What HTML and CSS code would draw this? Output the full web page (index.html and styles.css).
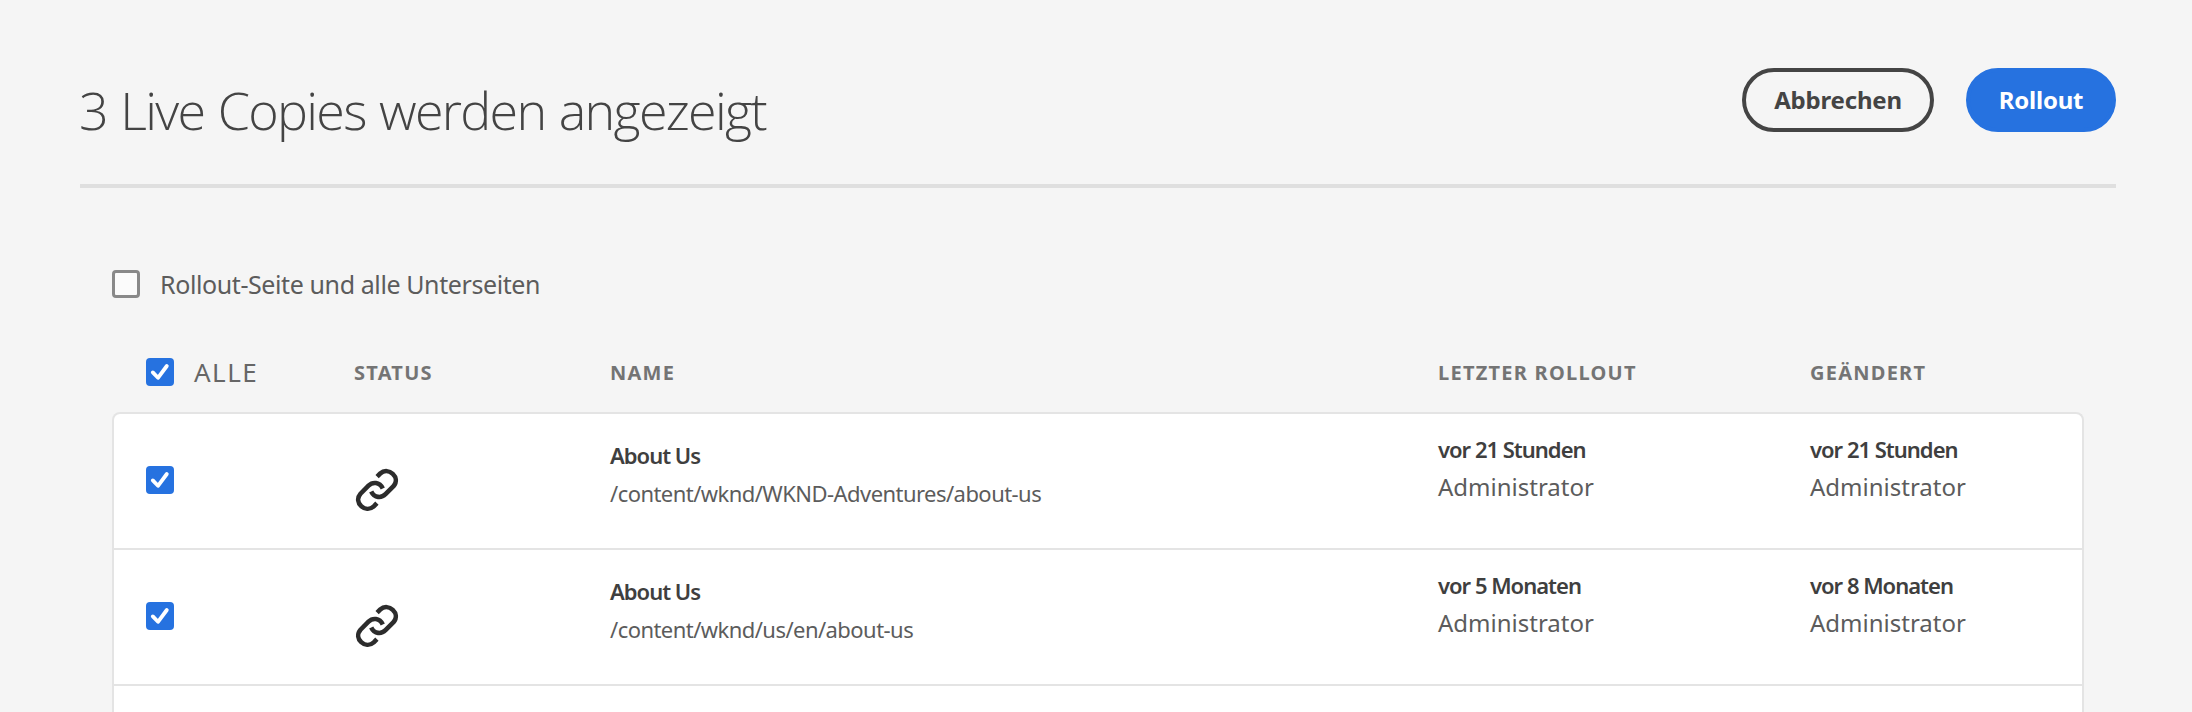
FILE: index.html
```html
<!DOCTYPE html>
<html lang="de">
<head>
<meta charset="utf-8">
<title>Rollout</title>
<link rel="stylesheet" href="styles.css">
</head>
<body>
<svg class="defs" aria-hidden="true">
  <symbol id="check" viewBox="0 0 28 28"><path d="M6.8 14.4 L12 19.8 L20.8 8" fill="none" stroke="#fff" stroke-width="3.8" stroke-linecap="round" stroke-linejoin="round"/></symbol>
  <symbol id="link" viewBox="0 0 44 44"><g fill="none" stroke="#2c2c2c" stroke-width="4.6"><path d="M22.1 8.6 L25.2 5.5 C33.5 -1.8 46 9.5 38.5 18.2 L30.5 26.2 C26.5 30.2 19.5 30.2 16.2 23.4"/><path d="M21.9 35.2 L18.8 38.4 C10.5 45.8 -2 34.4 5.5 25.7 L13.5 17.7 C17.5 13.7 24.5 13.7 27.8 20.5"/></g></symbol>
</svg>
<header class="header">
  <h1 class="title">3 Live Copies werden angezeigt</h1>
  <div class="actions">
    <button class="btn btn-secondary">Abbrechen</button>
    <button class="btn btn-primary">Rollout</button>
  </div>
</header>
<main class="content">
  <label class="option"><span class="box"></span><span class="option-text">Rollout-Seite und alle Unterseiten</span></label>
  <div class="grid head">
    <div class="all"><span class="box checked"><svg><use href="#check"/></svg></span><span class="all-text">ALLE</span></div>
    <div>STATUS</div>
    <div>NAME</div>
    <div>LETZTER ROLLOUT</div>
    <div>GEÄNDERT</div>
  </div>
  <div class="table">
    <div class="grid row">
      <div class="select"><span class="box checked"><svg><use href="#check"/></svg></span></div>
      <div class="status"><svg class="link"><use href="#link"/></svg></div>
      <div class="name"><div class="strong">About Us</div><div class="path">/content/wknd/WKND-Adventures/about-us</div></div>
      <div class="date"><div class="strong">vor 21 Stunden</div><div class="user">Administrator</div></div>
      <div class="date"><div class="strong">vor 21 Stunden</div><div class="user">Administrator</div></div>
    </div>
    <div class="grid row">
      <div class="select"><span class="box checked"><svg><use href="#check"/></svg></span></div>
      <div class="status"><svg class="link"><use href="#link"/></svg></div>
      <div class="name"><div class="strong">About Us</div><div class="path">/content/wknd/us/en/about-us</div></div>
      <div class="date"><div class="strong">vor 5 Monaten</div><div class="user">Administrator</div></div>
      <div class="date"><div class="strong">vor 8 Monaten</div><div class="user">Administrator</div></div>
    </div>
  </div>
</main>
</body>
</html>
```
FILE: styles.css
```css
* { box-sizing: border-box; }
body {
  margin: 0;
  height: 712px;
  display: flex;
  flex-direction: column;
  background: #f5f5f5;
  color: #5c5c5c;
  font-family: "Noto Sans", "Open Sans", sans-serif;
}
.defs { display: none; }
.header {
  flex: none;
  display: flex;
  justify-content: space-between;
  align-items: flex-start;
  height: 188px;
  margin: 0 76px 0 80px;
  padding-top: 68px;
  border-bottom: 4px solid #dfdfdf;
}
.title {
  margin: 6px 0 0 -1px;
  font: 300 52px/72px "Open Sans", sans-serif;
  letter-spacing: -1.7px;
  word-spacing: 1.5px;
  color: #444;
}
.actions { display: flex; gap: 32px; }
.btn {
  height: 64px;
  padding: 0;
  border: 4px solid #444;
  border-radius: 32px;
  background: transparent;
  color: #444;
  font: 700 24px/54px "Noto Sans", sans-serif;
  letter-spacing: -0.2px;
}
.btn-secondary { width: 192px; }
.btn-primary { width: 150px; background: #2672e0; border-color: #2672e0; color: #fff; }
.content {
  flex: 1;
  display: flex;
  flex-direction: column;
  margin: 0 108px 0 112px;
  padding-top: 66px;
}
.option { flex: none; display: flex; align-items: center; height: 60px; gap: 20px; }
.option-text { font-size: 25px; line-height: 36px; letter-spacing: -0.4px; }
.box {
  flex: none;
  display: block;
  width: 28px;
  height: 28px;
  border: 3px solid #898989;
  border-radius: 4px;
  background: #fbfbfb;
}
.box.checked { border: 0; background: #2672e0; }
.box svg { display: block; width: 28px; height: 28px; }
.grid { display: grid; grid-template-columns: 242px 256px 828px 372px 1fr; }
.head {
  flex: none;
  height: 98px;
  align-items: center;
  padding-top: 18px;
  color: #747474;
  font-size: 20px;
  font-weight: 700;
  letter-spacing: 1.25px;
}
.all { display: flex; align-items: center; gap: 20px; padding-left: 34px; }
.all-text { color: #666; font-size: 26px; font-weight: 400; letter-spacing: 1.5px; line-height: 28px; }
.table {
  flex: 1;
  border: 2px solid #e4e4e4;
  border-bottom: 0;
  border-radius: 8px 8px 0 0;
  background: #fff;
}
.row { height: 136px; border-bottom: 2px solid #e4e4e4; margin-left: -2px; margin-right: -2px; }
.select { padding: 52px 0 0 34px; }
.status { padding: 54px 0 0 1px; }
.link { display: block; width: 44px; height: 44px; }
.name { padding-top: 22px; line-height: 38px; }
.strong { font-size: 22px; font-weight: 600; color: #3f3f3f; letter-spacing: -1px; }
.path { font-size: 22px; letter-spacing: -0.55px; }
.date { padding-top: 17px; line-height: 37px; }
.user { font-size: 24px; }
```
